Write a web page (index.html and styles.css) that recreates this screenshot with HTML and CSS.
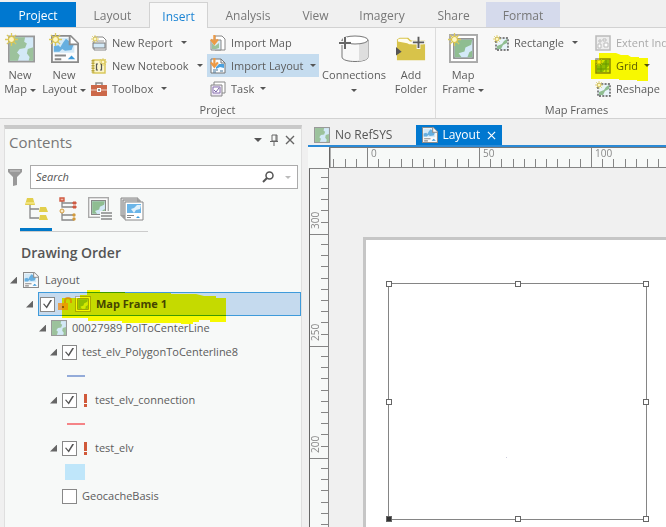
FILE: index.html
```html
<!DOCTYPE html>
<html lang="en">
<head>
<meta charset="utf-8">
<title>Layout</title>
<link rel="stylesheet" href="styles.css">
</head>
<body>
<svg class="defs" aria-hidden="true">
  <symbol id="sun" viewBox="0 0 14 14"><path d="M7 0v14M0 7h14M2 2l10 10M12 2L2 12" stroke="#dcc95a" stroke-width="1.4"/><circle cx="7" cy="7" r="3.2" fill="#fdf6c4" stroke="#d8c24a" stroke-width="1.2"/></symbol>
  <symbol id="map" viewBox="0 0 30 30"><rect x="1" y="1" width="28" height="28" fill="#d3e9f7" stroke="#999" stroke-width="2"/><path d="M2 2h17l-1 5 3 2-2 5-6 1-3 4 3 3-2 6H2z" fill="#9cc29c"/><path d="M22 15l6-2v15h-5l1-4-3-4z" fill="#9cc29c"/></symbol>
  <symbol id="layout" viewBox="0 0 30 30"><path d="M1 1h20l8 8v20H1z" fill="#fcfcfc" stroke="#8b8b8b" stroke-width="2"/><path d="M3 3h16v4l6 4v8H3z" fill="#d3e9f7"/><path d="M3 12l5-1 2 2 3-5 3-4 4 3 4 4-2 5-7 1-3-2-3 3H3z" fill="#66afe0"/><path d="M20 1v9h9" fill="#fff" stroke="#8b8b8b" stroke-width="2"/><path d="M4 22h12M4 26h7" stroke="#888" stroke-width="2"/><path d="M18 26l4-4 4 4z" fill="#3b9bdc"/></symbol>
  <symbol id="frame" viewBox="0 0 30 30"><rect x="1" y="1" width="28" height="28" fill="#fff" stroke="#aaa" stroke-width="2"/><rect x="5" y="5" width="20" height="20" fill="#d3e9f7" stroke="#888" stroke-width="1.5"/><path d="M6 6h18l-1 5-6 3-1 4-6 2 3 4H6z" fill="#8fbd91"/><path d="M21 19l3-2v7h-5z" fill="#8fbd91"/></symbol>
  <symbol id="down" viewBox="0 0 16 16"><path d="M5 0v9M1 5l4 5 4-5" fill="none" stroke="#ed9a45" stroke-width="2.5"/></symbol>
  <symbol id="patch" viewBox="0 0 16 16"><path d="M3 3h12v12H3z" fill="#e8f3fa" stroke="#555" stroke-width="1.4" stroke-dasharray="2 1.3"/><path d="M4 11l5-2 2-3 3-2v4l-4 2-2 4H4z" fill="#8fbd91"/></symbol>
</svg>

<header class="ribbon">
  <nav class="tabs" aria-label="Ribbon">
    <button class="tab project">Project</button>
    <button class="tab">Layout</button>
    <button class="tab active">Insert</button>
    <button class="tab">Analysis</button>
    <button class="tab">View</button>
    <button class="tab">Imagery</button>
    <button class="tab">Share</button>
    <button class="tab format">Format</button>
  </nav>
  <div class="groups">
    <section class="group project-group">
      <div class="tools">
        <button class="big new-map"><svg class="icon30" viewBox="0 0 30 30"><use href="#map" x="3" y="2" width="27" height="28"/><use href="#sun" width="13" height="13"/></svg><span>New<br>Map<i class="caret"></i></span></button>
        <button class="big new-layout"><svg class="icon30" viewBox="0 0 30 30"><use href="#layout" x="2" y="2" width="28" height="28"/><use href="#sun" width="13" height="13"/></svg><span>New<br>Layout<i class="caret"></i></span></button>
        <div class="stack reports">
          <button class="small"><svg class="icon16" viewBox="0 0 16 16"><path d="M3 2h9l3 3v10H3z" fill="#fff" stroke="#888"/><path d="M5 5h8v2H5z" fill="#ccc"/><rect x="2" y="8" width="12" height="5" fill="#d3e9f7" stroke="#777"/><use href="#sun" width="8" height="8"/></svg>New Report<i class="caret wide"></i></button>
          <button class="small"><svg class="icon16" viewBox="0 0 16 16"><rect x="2" y="2" width="12" height="13" fill="#fbf5c9" stroke="#d7c554" stroke-width="1.4"/><path d="M2 2v13" stroke="#b7a640" stroke-width="3" stroke-dasharray="1.5 1"/><path d="M7 6H5.500v6H7M9 6h1.500v6H9" fill="none" stroke="#555" stroke-width="1.2"/><use href="#sun" x="8" width="8" height="8"/></svg>New Notebook<i class="caret wide"></i></button>
          <button class="small"><svg class="icon16" viewBox="0 0 16 16"><path d="M5 4V2h6v2" fill="none" stroke="#8b8b8b" stroke-width="1.5"/><rect y="4" width="16" height="11" fill="#cc6849"/><path d="M0 9h16" stroke="#f2d6cc"/><rect x="6" y="7" width="4" height="4" fill="#fff"/><path d="M7 8h2v2H7z" fill="#888"/></svg>Toolbox<i class="caret wide"></i></button>
        </div>
        <div class="stack imports">
          <button class="small"><svg class="icon16" viewBox="0 0 16 16"><path d="M5 1h7l3 3v11H5z" fill="#fff" stroke="#888"/><path d="M1 5h10v10H1z" fill="#dcecf5" stroke="#888"/><path d="M2 8l3 3 4-3v5l-3 1H2z" fill="#9cc29c"/><use href="#down" width="14" height="14"/></svg>Import Map</button>
          <button class="small selected"><svg class="icon16" viewBox="0 0 16 16"><path d="M1 1h10l4 4v10H1z" fill="#f8fcff" stroke="#777"/><path d="M11 1v4h4" fill="none" stroke="#777"/><path d="M6 9l3-3 5 0v4l-4-1-4 2z" fill="#4ba1df"/><path d="M3 12h5M3 14h3M10 13h3" stroke="#47769b"/><use href="#down" width="14" height="14"/></svg>Import Layout<i class="caret"></i></button>
          <button class="small"><svg class="icon16" viewBox="0 0 16 16"><path d="M4 1h11v11H4z" fill="#fff" stroke="#888"/><path d="M1 4h11v11H1z" fill="#eee8f5" stroke="#888"/><path d="M3 6h7v6H3z" fill="#fff" stroke="#8870b0"/><path d="M4 9l2 2 3-4" fill="none" stroke="#7a65a5"/></svg>Task<i class="caret"></i></button>
        </div>
        <button class="big connections"><svg class="icon30" viewBox="0 0 30 30"><path d="M3 7v17c0 6 26 6 26 0V7" fill="#f8f8f8" stroke="#777"/><path d="M20 11l9-3v16c0 2-5 4-9 4z" fill="#dedede"/><ellipse cx="16" cy="7" rx="13" ry="4" fill="#fff" stroke="#777"/><path d="M6 4v12M0 10h12" stroke="#f8f8f8" stroke-width="4"/><path d="M6 4v12M0 10h12" stroke="#666" stroke-width="2"/></svg><span>Connections<br><i class="caret"></i></span></button>
        <button class="big add-folder"><svg class="icon30" viewBox="0 0 32 30"><path d="M1 28V6l3-2h9l3 3h15v21z" fill="#d8c34a"/><path d="M2 8V6l2-1h8l3 3h14v3H14l-2-1z" fill="#fffdf0"/><path d="M24 2v14M17 9h14" stroke="#f8f8f8" stroke-width="4"/><path d="M24 3v12M18 9h12" stroke="#5c5c5c" stroke-width="2"/><path d="M0 14l6 5-6 4z" fill="#555"/></svg><span>Add<br>Folder</span></button>
      </div>
      <h2>Project</h2>
    </section>
    <section class="group frames-group">
      <div class="tools">
        <button class="big map-frame"><svg class="icon30" viewBox="0 0 30 30"><use href="#frame" x="1" y="1" width="29" height="29"/><use href="#sun" width="13" height="13"/></svg><span>Map<br>Frame<i class="caret"></i></span></button>
        <div class="stack shapes">
          <button class="small"><svg class="icon16" viewBox="0 0 16 16"><use href="#patch" width="16" height="16"/><use href="#sun" width="8" height="8"/></svg>Rectangle<i class="caret wide"></i></button>
        </div>
        <div class="stack extents">
          <button class="small disabled" disabled><svg class="icon16" viewBox="0 0 16 16"><rect x="1" y="1" width="14" height="14" fill="#eee" stroke="#bbb" stroke-width="1.5"/><path d="M4 5h2v2H4zM8 4h3v2H8zM3 9h3v4H3zM9 8h4v4H9z" fill="#fff" stroke="#bbb"/></svg>Extent Indicator</button>
          <button class="small"><svg class="icon16" viewBox="0 0 16 16"><rect x="1" y="1" width="14" height="14" fill="#cfe6ef" stroke="#888" stroke-width="1.5"/><path d="M2 7l5-1 3-4h4v6l-4 3-2 3H2z" fill="#8fbd91"/><path d="M6 2v12M11 2v12M2 6h12M2 11h12" stroke="#5f8f62" stroke-width=".8"/><use href="#sun" width="8" height="8"/></svg>Grid<i class="caret"></i></button>
          <button class="small"><svg class="icon16" viewBox="0 0 16 16"><use href="#patch" width="16" height="16"/><use href="#sun" width="8" height="8"/></svg>Reshape<i class="caret wide"></i></button>
        </div>
      </div>
      <h2>Map Frames</h2>
    </section>
  </div>
  <svg class="marker grid-marker" viewBox="0 0 58 30" aria-hidden="true"><path d="M0 7h8V0h17l5 2h7l3 2h8v1h9v23H46v-1H28v-1H0z" fill="#ff0"/></svg>
</header>

<main class="workspace">
  <aside class="pane">
    <div class="pane-head">
      <h1>Contents</h1>
      <button aria-label="Pane options"><i class="caret"></i></button>
      <button aria-label="Pin"><svg viewBox="0 0 10 12" width="10" height="12"><path d="M3 1h5v6H3zM7 1v6M1 7.500h8M5 8v4" fill="none" stroke="#666"/></svg></button>
      <button aria-label="Close"><svg viewBox="0 0 10 10" width="10" height="10"><path d="M1 1l8 8M9 1l-8 8" stroke="#666" stroke-width="1.4"/></svg></button>
    </div>
    <div class="search-row">
      <svg class="funnel" viewBox="0 0 14 17"><path d="M0 0h14v3L9 8v8l-4 1V8L0 3z" fill="#999"/><path d="M2 2h10" stroke="#ccc"/></svg>
      <label class="search"><input type="search" placeholder="Search" aria-label="Search"><svg width="12" height="12" viewBox="0 0 12 12"><circle cx="7.500" cy="4.500" r="3.500" fill="none" stroke="#555" stroke-width="1.5"/><path d="M5 7l-4 4" stroke="#555" stroke-width="2"/></svg><i class="caret pale"></i></label>
    </div>
    <div class="views">
      <button class="current" aria-label="List by drawing order"><svg viewBox="0 0 24 24"><path d="M6 8v13h9M6 12h9" fill="none" stroke="#888" stroke-width="1.3"/><path d="M3 1h6l2 7H1zM16 10h6l2 5h-9zM16 18h6l2 5h-9z" fill="#e2cf4c"/><path d="M2 6h8" stroke="#fff5a8"/></svg></button>
      <button aria-label="List by data source"><svg viewBox="0 0 24 24"><path d="M6 4v6h12M6 6h12M6 16v7h12M6 18h12" fill="none" stroke="#888" stroke-width="1.3"/><path d="M4 1h4v3H4z" fill="#f4b8a8" stroke="#cf5b42" stroke-width="1.4"/><path d="M17 5h3v2h-3zM17 9h3v2h-3z" fill="#cf5b42" stroke="#cf5b42"/><circle cx="6" cy="14" r="2" fill="#f7e9c9" stroke="#d39b3c"/><circle cx="18" cy="18" r="1.700" fill="#d39b3c"/><circle cx="18" cy="22" r="1.700" fill="#d39b3c"/></svg></button>
      <button aria-label="List map frames"><svg viewBox="0 0 24 24"><use href="#frame" width="21" height="21"/><path d="M12 14h12v10H12z" fill="#f7f9f8"/><path d="M13 16h11M13 19h11M13 22h11" stroke="#888" stroke-width="1.3"/></svg></button>
      <button aria-label="List by map series"><svg viewBox="0 0 24 24"><path d="M1 1h17v18H1zM3 3h17v18H3z" fill="#ddd" stroke="#888"/><path d="M5 5h18v18H5z" fill="#fff" stroke="#888"/><path d="M7 7h14v9H7z" fill="#6bb5e8"/><path d="M11 12l3-1 3-3h4l-1 4-4 1-2 3z" fill="#e1f1fb"/><path d="M7 18.500h7M7 20.500h4" stroke="#888"/><path d="M16 21l2-2 2 2z" fill="#3b9bdc"/></svg></button>
    </div>
    <h3>Drawing Order</h3>
    <ul class="tree">
      <li class="row"><i class="twist"></i><svg class="icon16"><use href="#layout"/></svg><span>Layout</span></li>
      <li class="row level1"><i class="twist"></i><div class="picked">
        <input type="checkbox" id="frame1" checked>
        <svg class="lock" viewBox="0 0 14 14"><path d="M7 6V4c0-4 6-4 6 0v2" fill="none" stroke="#d99a4a" stroke-width="2"/><rect y="6" width="10" height="7" fill="#e8a04b"/><path d="M4 9h2v2H4z" fill="#8b5a2b"/></svg>
        <svg class="icon16"><use href="#frame"/></svg><label for="frame1">Map Frame 1</label></div></li>
      <li class="row level2"><i class="twist"></i><svg class="icon16"><use href="#map"/></svg><span>00027989 PolToCenterLine</span></li>
      <li class="row level3"><i class="twist"></i><input type="checkbox" id="line8" checked><label for="line8">test_elv_PolygonToCenterline8</label></li>
      <li class="row swatch"><i class="line blue"></i></li>
      <li class="row level3"><i class="twist"></i><input type="checkbox" id="conn" checked><i class="alert"></i><label for="conn">test_elv_connection</label></li>
      <li class="row swatch"><i class="line red"></i></li>
      <li class="row level3"><i class="twist"></i><input type="checkbox" id="elv" checked><i class="alert"></i><label for="elv">test_elv</label></li>
      <li class="row swatch"><i class="fill"></i></li>
      <li class="row level3"><i class="twist none"></i><input type="checkbox" id="geo"><label for="geo">GeocacheBasis</label></li>
    </ul>
    <svg class="marker frame-marker" viewBox="0 0 164 34" aria-hidden="true"><path d="M0 8h18V5h7V0h13v2h25v1h46v1h25l8 2h12v2h10v24h-16v-2h-11v2h-6v2h-12v-1H60v-2H26v-3H0z" fill="#ff0"/></svg>
  </aside>

  <section class="document">
    <nav class="doc-tabs">
      <a class="doc-tab" href="#refsys"><svg class="icon16"><use href="#map"/></svg>No RefSYS</a>
      <a class="doc-tab open" href="#layout-view"><svg class="icon16"><use href="#layout"/></svg>Layout<svg class="close" viewBox="0 0 10 10"><path d="M1 1l8 8M9 1l-8 8" stroke="#fff" stroke-width="1.3"/></svg></a>
    </nav>
    <div class="view">
      <div class="corner"></div>
      <svg class="ruler-x">
        <defs><pattern id="ticks-x" x="38" y="0" width="112" height="21" patternUnits="userSpaceOnUse"><path d="M.5 0v21M11.500 11v9M22.500 11v9M34.500 11v9M45.500 11v9M56.500 11v9M67.500 11v9M78.500 11v9M90.500 11v9M101.500 11v9" stroke="#858585"/></pattern></defs>
        <rect width="100%" height="21" fill="url(#ticks-x)"/>
        <path d="M.5 0v21" stroke="#666" stroke-width="2"/>
        <text x="42" y="9">0</text><text x="154" y="9">50</text><text x="266" y="9">100</text>
      </svg>
      <svg class="ruler-y">
        <defs><pattern id="ticks-y" x="0" y="65" width="20" height="112" patternUnits="userSpaceOnUse"><path d="M0 .5h20M11 10.500h8M11 21.500h8M11 32.500h8M11 44.500h8M11 55.500h8M11 66.500h8M11 77.500h8M11 88.500h8M11 100.500h8" stroke="#858585"/></pattern></defs>
        <rect width="20" height="100%" fill="url(#ticks-y)"/>
        <text transform="translate(9 60) rotate(-90)">300</text><text transform="translate(9 172) rotate(-90)">250</text><text transform="translate(9 284) rotate(-90)">200</text>
      </svg>
      <div class="canvas">
        <div class="page">
          <div class="map-box">
            <b class="grip nw"></b><b class="grip n"></b><b class="grip ne"></b>
            <b class="grip w"></b><b class="grip e"></b>
            <b class="grip sw"></b><b class="grip s"></b><b class="grip se"></b>
            <b class="speck"></b>
          </div>
        </div>
      </div>
    </div>
  </section>
</main>
</body>
</html>
```

FILE: styles.css
```css
* { box-sizing: border-box; }
html, body { height: 100%; }
body {
  margin: 0;
  display: flex;
  flex-direction: column;
  overflow: hidden;
  background: #f0f0f0;
  color: #5c5c5c;
  font: 11px/14px "Open Sans", "Noto Sans", sans-serif;
}
button { border: 0; padding: 0; background: none; color: inherit; font: inherit; }
h1, h2, h3, ul { margin: 0; padding: 0; font-weight: 400; }
a { color: inherit; text-decoration: none; }
svg { flex: none; }
.defs { position: absolute; width: 0; height: 0; }
.icon30 { width: 30px; height: 30px; }
.icon16 { width: 16px; height: 16px; }

.caret {
  display: inline-block;
  flex: none;
  border: 3px solid transparent;
  border-top-color: #555;
  border-bottom: 0;
  margin-left: 3px;
  vertical-align: middle;
}
.caret.pale { border-top-color: #bbb; }

/* Ribbon */
.ribbon { position: relative; flex: none; overflow: hidden; }
.tabs {
  display: grid;
  grid-template-columns: 76px 73px 59px 80px 55px 78px 65px 74px;
  height: 28px;
  padding-top: 2px;
  border-bottom: 1px solid #d2d2d2;
}
.tab { padding-top: 2px; font-size: 12px; line-height: 16px; color: #777; }
.tab.project { background: #0078d0; color: #fff; }
.tab.active { background: #f8f8f8; border: 1px solid #d2d2d2; border-bottom: 0; color: #1b84d4; margin-bottom: -1px; }
.tab.format { background: #d5daec; }
.groups { display: flex; height: 91px; background: #f8f8f8; border-bottom: 1px solid #d2d2d2; }
.group { flex: none; display: flex; flex-direction: column; }
.project-group { width: 435px; }
.frames-group { width: 282px; }
.tools { display: flex; height: 74px; padding-top: 3px; }
.group h2 { font-size: 11px; line-height: 16px; text-align: center; }
.frames-group { border-left: 1px solid #dcdcdc; }
.big { display: flex; flex-direction: column; align-items: center; justify-content: flex-start; gap: 5px; padding-top: 2px; white-space: nowrap; }
.new-map { width: 40px; }
.new-layout { width: 48px; }
.connections { width: 70px; }
.connections .caret { margin-left: 0; }
.add-folder { width: 44px; }
.map-frame { width: 54px; }
.stack { display: flex; flex-direction: column; }
.small { display: flex; align-items: center; gap: 5px; height: 23px; padding: 0 3px; white-space: nowrap; }
.small .caret { margin-left: 1px; }
.small .caret.wide { margin-left: 3px; }
.reports { width: 119px; }
.imports { width: 112px; }
.shapes { width: 102px; }
.small.selected { background: #c5dcef; }
.small.disabled { color: #aaa; }

.marker { position: absolute; mix-blend-mode: multiply; pointer-events: none; }
.grid-marker { left: 591px; top: 53px; width: 58px; height: 30px; }
.frame-marker { left: 57px; top: 161px; width: 164px; height: 34px; }

/* Contents pane */
.workspace { flex: 1; display: flex; min-height: 0; padding: 6px 0 0 4px; }
.pane {
  position: relative;
  flex: none;
  width: 298px;
  background: #f7f9f8;
  border: 1px solid #dfdfdf;
  border-top: 4px solid #c9c9c9;
  border-bottom: 0;
}
.pane-head { display: flex; align-items: center; gap: 6px; height: 26px; padding: 0 6px 0 4px; }
.pane-head h1 { flex: 1; font-size: 15px; line-height: 20px; color: #777; }
.pane-head button { display: flex; justify-content: center; width: 10px; margin-bottom: 4px; }
.pane-head .caret { margin: 0; border-width: 4px 4px 0; }
.search-row { display: flex; align-items: center; gap: 8px; padding: 10px 3px 0; }
.funnel { width: 14px; height: 17px; }
.search { flex: 1; display: flex; align-items: center; height: 24px; padding: 0 6px 0 5px; gap: 8px; background: #fff; border: 1px solid #ababab; }
.search input { flex: 1; min-width: 0; border: 0; padding: 0; outline: 0; background: none; font: italic 11px/16px "Open Sans", sans-serif; }
.search input::placeholder { color: #555; }
.views { display: flex; width: 128px; margin: 7px 0 0 15px; border-bottom: 1px solid #ccc; }
.views button { width: 32px; height: 35px; padding-top: 1px; display: flex; justify-content: center; align-items: flex-start; }
.views svg { width: 24px; height: 24px; }
.views .current { border-bottom: 3px solid #0078c8; }
.pane h3 { margin: 11px 0 5px 16px; font-size: 14px; line-height: 20px; font-weight: 600; color: #555; }

.tree { list-style: none; }
.row { display: flex; align-items: center; gap: 6px; height: 24px; padding-left: 5px; white-space: nowrap; }
.level1 { padding-left: 21px; gap: 5px; }
.level2 { padding-left: 34px; gap: 5px; }
.level3 { padding-left: 45px; gap: 5px; }
.swatch { padding-left: 60px; }
.twist { flex: none; width: 7px; height: 7px; background: #666; clip-path: polygon(100% 0, 100% 100%, 0 100%); }
.twist.none { visibility: hidden; }
.picked { flex: 1; display: flex; align-items: center; gap: 3px; height: 24px; padding-left: 1px; background: #c5daee; border: 1px solid #3f9bdb; font-weight: 700; color: #444; }
.picked label { margin-left: 2px; }
.lock { width: 14px; height: 14px; }
input[type="checkbox"] { appearance: none; flex: none; width: 15px; height: 15px; margin: 0; background: #fff; border: 1px solid #888; }
input[type="checkbox"]:checked::before {
  content: "";
  display: block;
  width: 9px;
  height: 9px;
  margin: 2px;
  background: #555;
  clip-path: polygon(0 50%, 12% 44%, 38% 74%, 84% 0, 100% 8%, 42% 100%);
}
.alert { flex: none; width: 3px; height: 13px; margin: 0 3px 0 2px; background: linear-gradient(#d0593a 9px, transparent 9px 10px, #d0593a 10px); }
.line { width: 18px; height: 2px; margin-left: 2px; }
.line.blue { background: #93abd9; }
.line.red { background: #f58487; }
.fill { width: 20px; height: 16px; background: #bfe6fa; }

/* Layout view */
.document { flex: 1; min-width: 0; display: flex; flex-direction: column; margin-left: 6px; }
.doc-tabs { flex: none; display: flex; gap: 18px; height: 22px; border-bottom: 2px solid #2b8ad6; }
.doc-tab { display: flex; align-items: center; gap: 5px; padding: 0 6px; font-size: 12px; line-height: 16px; color: #555; }
.doc-tab.open { gap: 4px; background: #0078d0; color: #fff; }
.close { width: 9px; height: 9px; margin-left: 3px; }
.view { flex: 1; min-height: 0; display: grid; grid-template: 21px 1fr / 21px 1fr; }
.corner, .ruler-x, .ruler-y { background: #f7f9f8; }
.ruler-x { width: 100%; height: 21px; border-top: 1px solid #777; border-bottom: 1px solid #858585; }
.ruler-y { width: 20px; height: 100%; margin-left: 1px; border: 1px solid #858585; border-left-color: #666; border-bottom: 0; }
.view text { font-size: 10px; fill: #888; }
.canvas { overflow: hidden; padding: 69px 0 0 34px; }
.page { position: relative; height: 100%; background: #fff; border: 3px solid #c6c6c6; border-width: 3px 0 0 3px; }
.map-box { position: absolute; left: 22px; top: 43px; width: 259px; height: 237px; border: 1px solid #858585; }
.grip { position: absolute; width: 6px; height: 6px; background: #fff; border: 1px solid #666; }
.nw, .n, .ne { top: -3px; }
.w, .e { top: 115px; }
.sw, .s, .se { bottom: -3px; }
.nw, .w, .sw { left: -3px; }
.n, .s { left: 126px; }
.ne, .e, .se { right: -3px; }
.sw { background: #333; }
.speck { position: absolute; left: 117px; top: 173px; width: 1px; height: 1px; background: #ccd; }
```
